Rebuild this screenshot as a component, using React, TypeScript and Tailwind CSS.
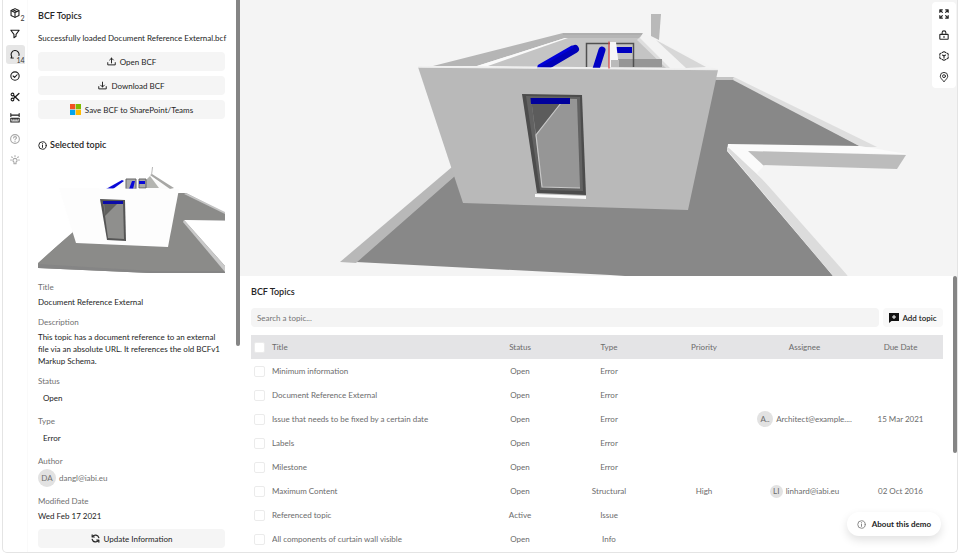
import type { ReactNode } from "react";

type IconProps = { className?: string; children: ReactNode };

function Icon({ className = "size-[10px]", children }: IconProps) {
  return (
    <svg
      viewBox="0 0 24 24"
      className={`shrink-0 ${className}`}
      fill="none"
      stroke="currentColor"
      strokeWidth="2.6"
      strokeLinejoin="round"
      strokeLinecap="round"
      aria-hidden="true"
    >
      {children}
    </svg>
  );
}

const infoShape = (
  <>
    <circle cx="12" cy="12" r="10" />
    <path d="M12 11v6M12 7v.5" />
  </>
);

const tools = [
  {
    label: "Models",
    count: "2",
    shape: (
      <>
        <path d="M12 1.500 21.500 6v12L12 22.500 2.500 18V6z" />
        <path d="M3 6.500 12 11l9-4.500M12 11v11M7 4l9 4.500" />
      </>
    ),
  },
  { label: "Filter", shape: <path d="M2 3h20l-7.500 10v4.500L9.500 21v-8z" /> },
  {
    label: "Topics",
    count: "14",
    active: true,
    shape: <path d="M8 19H2.500l1.500-3.500A9.500 9.500 0 1 1 21.500 13" />,
  },
  {
    label: "Checks",
    shape: (
      <>
        <circle cx="12" cy="12" r="10" />
        <path d="m7.500 12 3.500 3.500 6-6.500" />
      </>
    ),
  },
  {
    label: "Clipping",
    shape: (
      <>
        <circle cx="6" cy="6" r="3.300" />
        <circle cx="6" cy="18" r="3.300" />
        <path d="M8.500 8.500 21.500 20.500M8.500 15.500 21.500 3.500" strokeWidth="3" />
      </>
    ),
  },
  {
    label: "Measure",
    shape: (
      <>
        <path d="M2 1.500v7M22 1.500v7M2 5h20" />
        <path d="M2 12.500h20v9H2zM7 13v4M12 13v4M17 13v4" />
      </>
    ),
  },
  {
    label: "Help",
    muted: true,
    shape: (
      <>
        <circle cx="12" cy="12" r="10.500" />
        <path d="M8.500 9.500c.500-4.500 7.500-4 7 0-.300 2-3.500 2.500-3.500 4.500M12 17.500v.500" />
      </>
    ),
  },
  {
    label: "Tips",
    muted: true,
    shape: (
      <>
        <path d="M9.500 17c-4-2.500-3-9 2.500-9s6.500 6.500 2.500 9v4h-5z" />
        <path d="M12 1.500v2M1.500 12h2M20.500 12h2M4 4.500l1.500 1.500M20 4.500l-1.500 1.500" />
      </>
    ),
  },
];

function ToolRail() {
  return (
    <nav
      aria-label="Tools"
      className="flex w-[25px] shrink-0 flex-col items-center gap-[2px] border-r border-[#fafafa] pt-[3px]"
    >
      {tools.map((tool) => (
        <button
          key={tool.label}
          aria-label={tool.label}
          className={`relative flex h-[19px] w-[19px] items-center justify-center rounded-[3px] ${
            tool.active ? "bg-[#e6e6e6]" : ""
          } ${tool.muted ? "text-[#a8a8a8]" : "text-[#1c1c1c]"}`}
        >
          <Icon>{tool.shape}</Icon>
          {tool.count && (
            <span
              className={`absolute right-0 bottom-0 text-[7px] leading-[7px] text-[#333] ${
                tool.active ? "bg-[#e6e6e6]" : ""
              }`}
            >
              {tool.count}
            </span>
          )}
        </button>
      ))}
    </nav>
  );
}

const panelButton =
  "flex h-[19px] w-full items-center justify-center gap-1 rounded-[4px] bg-[#f5f5f5] text-[#242424]";

function Thumbnail() {
  return (
    <svg viewBox="38 160 187 113" className="block w-full" role="img" aria-label="Topic snapshot">
      <path d="M38 263 72 232 90 200 179 193 186 193 225 213V273L150 273 38 268z" fill="#8b8b89" />
      <path d="M38 263v5l112 5h75v-2h-72L38 264z" fill="#858585" />
      <path d="M184 220h41v46z" fill="#fff" />
      <path d="m184 220 41 46v6l-42-50z" fill="#c9c9c9" />
      <path d="m186 193 39 19v2l-41-20z" fill="#c4c4c4" />
      <path d="M59 188 38 255v7l35-30z" fill="#fff" />
      <path d="M187 221h38v-1z" fill="#bbb" />
      <path d="M105 188 123 180 152 179 174 189z" fill="#fbfbfb" />
      <path d="M146 188V180l4-4 9 12z" fill="#b4b5b1" />
      <path d="m150 175 2-1 22 14-4 1z" fill="#a7a7a5" />
      <path d="m151 176 1-9h1l-1 8z" fill="#b5b5b5" />
      <path d="M126 179h10v10h-10zM139 179h7v9h-7z" fill="#aaa" stroke="#666" strokeWidth="1" />
      <path d="m106 189 16-9 2 1-11 8z" fill="#0a0ad8" />
      <path d="m129 189 3-8h3l-2 8zM139 181h6v3h-6z" fill="#0a0ad8" />
      <path d="M59 188 179 189 168 247 76 243z" fill="#fdfdfd" />
      <path d="m100 199 25 1 1 41-19-1z" fill="#555" />
      <path d="m103 201 20 1 1 37-16-1z" fill="#8f8f8d" />
      <path d="m104 203 13 1-12 12z" fill="#60605e" />
      <path d="M103 201h20v3h-20z" fill="#0c0ca8" />
    </svg>
  );
}

function Avatar({ initials, className }: { initials: string; className: string }) {
  return (
    <span className={`flex shrink-0 items-center justify-center rounded-full bg-[#e2e2e2] ${className}`}>
      {initials}
    </span>
  );
}

const fieldLabel = "text-[#707070]";

function TopicPanel() {
  return (
    <aside className="relative w-[212px] shrink-0 overflow-hidden pr-[15px] pl-[10px] leading-3 text-[#242424]">
      <h2 className="mt-[10px] text-[9px] font-semibold">BCF Topics</h2>
      <p className="mt-[10px] whitespace-nowrap">Successfully loaded Document Reference External.bcf</p>
      <div className="mt-2 flex flex-col gap-[5px]">
        <button className={panelButton}>
          <Icon className="size-[9px]">
            <path d="M12 16V3M7 8l5-5 5 5M2 15v6h20v-6" />
          </Icon>
          Open BCF
        </button>
        <button className={panelButton}>
          <Icon className="size-[9px]">
            <path d="M12 3v13M7 11l5 5 5-5M2 15v6h20v-6" />
          </Icon>
          Download BCF
        </button>
        <button className={panelButton}>
          <svg viewBox="0 0 22 22" className="size-[11px]" aria-hidden="true">
            <path d="M0 0h10.500v10.500H0z" fill="#f25022" />
            <path d="M11.500 0H22v10.500H11.500z" fill="#7fba00" />
            <path d="M0 11.500h10.500V22H0z" fill="#00a4ef" />
            <path d="M11.500 11.500H22V22H11.500z" fill="#ffb900" />
          </svg>
          Save BCF to SharePoint/Teams
        </button>
      </div>
      <h3 className="mt-5 mb-[9px] flex items-center gap-[3px] text-[9px] font-semibold">
        <Icon className="size-[9px]">{infoShape}</Icon>
        Selected topic
      </h3>
      <Thumbnail />
      <dl className="mt-2">
        <dt className={fieldLabel}>Title</dt>
        <dd className="mt-[3px]">Document Reference External</dd>
        <dt className={`mt-2 ${fieldLabel}`}>Description</dt>
        <dd className="mt-[3px]">
          This topic has a document reference to an external file via an absolute URL. It references the old BCFv1
          Markup Schema.
        </dd>
        <dt className={`mt-2 ${fieldLabel}`}>Status</dt>
        <dd className="mt-[5px] pl-[5px]">Open</dd>
        <dt className={`mt-[11px] ${fieldLabel}`}>Type</dt>
        <dd className="mt-[5px] pl-[5px]">Error</dd>
        <dt className={`mt-[11px] ${fieldLabel}`}>Author</dt>
        <dd className="mt-[2px] flex items-center gap-[3px] text-[#707070]">
          <Avatar initials="DA" className="size-[18px]" />
          dangl@iabi.eu
        </dd>
        <dt className={`mt-2 ${fieldLabel}`}>Modified Date</dt>
        <dd className="mt-[3px]">Wed Feb 17 2021</dd>
      </dl>
      <button className={`mt-[7px] ${panelButton}`}>
        <Icon className="size-[9px]">
          <path d="M21 10A9.500 9.500 0 0 0 4 7M3 2v6h6M3 14a9.500 9.500 0 0 0 17 3M21 22v-6h-6" strokeWidth="3" />
        </Icon>
        Update Information
      </button>
      <div className="absolute top-0 right-0 h-[346px] w-1 rounded-b-full bg-[#858585]" />
    </aside>
  );
}

function Model() {
  return (
    <svg
      viewBox="240 0 717 276"
      preserveAspectRatio="xMidYMid slice"
      className="absolute inset-0 size-full"
      role="img"
      aria-label="Building model"
    >
      {/* floor slab */}
      <path d="M356 262 454 176 600 100 717 79H734L862 147 728 146 834 277H640L610 275z" fill="#888" />
      <path d="M340 262 452 167 455 176 356 263z" fill="#b8b8b8" />
      {/* terrace walls */}
      <path d="M716 77H734L733 80H716z" fill="#c4c4c4" />
      <path d="m734 77 143 70h-16L733 80z" fill="#dedede" />
      <path d="M728 144 860 146 907 154 748 152 764 166 850 277h-16L727 151z" fill="#fbfbfb" />
      <path d="m764 165 84 111h-15L727 150v-3z" fill="#dcdcdc" />
      <path d="m728 144 20 7 15 14 15 29-50-47z" fill="#fafafa" />
      <path d="M764 166 897 169 906 276H848L757 173z" fill="#f4f4f4" />
      <path d="m748 151 158 4-9 14-134-4z" fill="#bcbcbc" />
      {/* chimney and roof edge */}
      <path d="M651 14h10l-2 26-8-4z" fill="#b9b9b9" />
      <path d="M433 66 563 33H643L641 38H565L477 66z" fill="#b5b5b5" />
      <path d="M563 34h80" stroke="#a8a8a8" />
      <path d="M477 66 565 38h3L488 66z" fill="#fafafa" />
      <path d="M488 66 568 38h73l32 30z" fill="#c4c4c4" />
      <path d="m637 40 5-5 32 33h-8z" fill="#dedede" />
      <path d="m640 38 3-5 75 37-47-1z" fill="#f3f3f3" />
      <path d="m656 40 50 27-20 1z" fill="#d7d7d7" />
      {/* interior openings and beams */}
      <path d="M617 59h45v8h-43z" fill="#969696" />
      <path d="M586.500 67V43.500H633.500V67" fill="none" stroke="#505050" strokeWidth="1.500" />
      <path d="m541 69 34-20" stroke="#0000b8" strokeWidth="8" strokeLinecap="round" />
      <path d="m539 66 33-19" stroke="#0000d8" strokeWidth="3" strokeLinecap="round" />
      <path d="m596 69 6-19" stroke="#0000c4" strokeWidth="7" strokeLinecap="round" />
      <path d="M616 47h16v6h-16z" fill="#0000c0" />
      <path d="M610 42h6l3 25h-10z" fill="#f6f6f6" />
      <path d="M611 60h8v7h-8z" fill="#bababa" />
      {/* front wall */}
      <path d="m418 67 300 3-30 140-225-7z" fill="#b9b9b9" />
      <path d="m418 67 300 2.500" stroke="#eee" strokeWidth="1.500" />
      <path d="M609 41.500v27" stroke="#d84040" strokeWidth="1.200" />
      {/* door */}
      <path d="m522 94 60 1 4 100-49-2z" fill="#4c4c4c" />
      <path d="m526 96 54 1 3 94-43-1z" fill="#626262" />
      <path d="m531 98 46 1 3 89-38-1z" fill="#969696" />
      <path d="m531 99 30 4-25 32z" fill="#5c5c5c" />
      <path d="m561 103-25 32 6 52 38 1" fill="none" stroke="#c8c8c8" strokeWidth="1.200" />
      <path d="M530.500 98H570v6h-39z" fill="#00009c" />
      <path d="m535 194 51 2v3l-51-2z" fill="#fafafa" />
    </svg>
  );
}

const viewTools = [
  {
    label: "Fullscreen",
    shape: (
      <path
        d="M2 8V2h6M3 3l5 5M16 2h6v6M21 3l-5 5M2 16v6h6M3 21l5-5M22 16v6h-6M21 21l-5-5"
        strokeWidth="2.800"
      />
    ),
  },
  {
    label: "Unlock",
    shape: (
      <>
        <rect x="2" y="10.500" width="20" height="11.500" rx="1" />
        <path d="M7.500 10V6.500a4.500 4.500 0 0 1 9 0V8M12 15v3" />
      </>
    ),
  },
  {
    label: "Focus model",
    shape: (
      <>
        <path d="M8 3.500 12 1.500l4 2M19 5l3 2v3M22 14v3l-3 2M16 20.500l-4 2-4-2M5 19l-3-2v-3M2 10V7l3-2" />
        <path d="M12 17v-5M8.500 9.500 12 12l3.500-2.500" />
      </>
    ),
  },
  {
    label: "Location",
    shape: (
      <>
        <path d="M12 23c-5-5-9-9-9-13a9 9 0 0 1 18 0c0 4-4 8-9 13z" strokeWidth="2.200" />
        <circle cx="12" cy="10" r="3.500" strokeWidth="2.200" />
      </>
    ),
  },
];

function Viewer() {
  return (
    <section aria-label="3D viewer" className="relative overflow-hidden bg-[#f4f4f4]">
      <Model />
      <div className="absolute top-[2px] right-px flex w-6 flex-col items-center gap-[2px] rounded-[4px] bg-white pt-[2px] pb-[2px] text-[#242424]">
        {viewTools.map((tool) => (
          <button key={tool.label} aria-label={tool.label} className="flex h-[19px] w-full items-center justify-center">
            <Icon className="size-[10px]">{tool.shape}</Icon>
          </button>
        ))}
      </div>
    </section>
  );
}

type Topic = {
  title: string;
  status: string;
  type: string;
  priority?: string;
  initials?: string;
  assignee?: string;
  due?: string;
};

const topics: Topic[] = [
  { title: "Minimum information", status: "Open", type: "Error" },
  { title: "Document Reference External", status: "Open", type: "Error" },
  {
    title: "Issue that needs to be fixed by a certain date",
    status: "Open",
    type: "Error",
    initials: "A..",
    assignee: "Architect@example....",
    due: "15 Mar 2021",
  },
  { title: "Labels", status: "Open", type: "Error" },
  { title: "Milestone", status: "Open", type: "Error" },
  {
    title: "Maximum Content",
    status: "Open",
    type: "Structural",
    priority: "High",
    initials: "LI",
    assignee: "linhard@iabi.eu",
    due: "02 Oct 2016",
  },
  { title: "Referenced topic", status: "Active", type: "Issue" },
  { title: "All components of curtain wall visible", status: "Open", type: "Info" },
];

const checkbox = "block size-[11px] appearance-none rounded-[2px] border border-[#ebebeb] bg-white";

function TopicTable() {
  return (
    <section className="relative overflow-hidden pr-[14px] pl-[11px]">
      <h2 className="mt-[10px] text-[9px] leading-3 font-semibold text-[#242424]">BCF Topics</h2>
      <div className="mt-[10px] flex gap-1">
        <input
          type="search"
          aria-label="Search a topic"
          placeholder="Search a topic..."
          className="h-[19px] min-w-0 flex-1 rounded-[4px] bg-[#f4f4f4] px-[6px] placeholder:text-[#757575]"
        />
        <button className="flex h-[19px] w-[60px] items-center justify-center gap-[3px] rounded-[4px] bg-[#f8f8f8] font-semibold whitespace-nowrap text-[#242424]">
          <svg viewBox="0 0 20 20" className="size-[10px]" aria-hidden="true">
            <path d="M0 0h20v16H5l-5 4z" fill="#111" />
            <path d="M10 4v8M6 8h8" stroke="#fff" strokeWidth="2" />
          </svg>
          Add topic
        </button>
      </div>
      <table className="mt-2 w-full table-fixed border-collapse text-center text-[#6b6b6b]">
        <colgroup>
          <col className="w-[21px]" />
          <col />
          <col className="w-[82px]" />
          <col className="w-[96px]" />
          <col className="w-[94px]" />
          <col className="w-[107px]" />
          <col className="w-[85px]" />
        </colgroup>
        <thead className="bg-[#e4e4e6]">
          <tr className="h-6">
            <th className="pl-[3px]">
              <input type="checkbox" aria-label="Select all topics" className={checkbox} />
            </th>
            <th className="text-left font-normal">Title</th>
            <th className="font-normal">Status</th>
            <th className="font-normal">Type</th>
            <th className="font-normal">Priority</th>
            <th className="font-normal">Assignee</th>
            <th className="font-normal">Due Date</th>
          </tr>
        </thead>
        <tbody>
          {topics.map((topic) => (
            <tr key={topic.title} className="h-6">
              <td className="pl-[3px]">
                <input type="checkbox" aria-label={`Select ${topic.title}`} className={checkbox} />
              </td>
              <td className="truncate text-left">{topic.title}</td>
              <td>{topic.status}</td>
              <td>{topic.type}</td>
              <td>{topic.priority}</td>
              <td>
                {topic.assignee && topic.initials && (
                  <span className="flex items-center justify-center gap-[3px] whitespace-nowrap">
                    <Avatar initials={topic.initials} className={topic.initials === "LI" ? "size-[13px]" : "size-4"} />
                    {topic.assignee}
                  </span>
                )}
              </td>
              <td>{topic.due}</td>
            </tr>
          ))}
        </tbody>
      </table>
      <div className="absolute top-0 right-0 h-[177px] w-1 rounded-full bg-[#858585]" />
      <button className="absolute right-4 bottom-4 flex h-6 items-center gap-[6px] rounded-full bg-white px-[10px] font-bold text-[#242424] shadow-[0_4px_10px_rgba(0,0,0,0.12)]">
        <Icon className="size-[9px] text-[#888]">{infoShape}</Icon>
        About this demo
      </button>
    </section>
  );
}

export default function App() {
  return (
    <div className="h-screen bg-white px-[2px] pb-px font-['Lato','Segoe_UI',sans-serif] text-[8px] leading-3">
      <div className="flex h-full overflow-hidden rounded-b-[5px] border-x border-b border-[#e4e4e4]">
        <ToolRail />
        <TopicPanel />
        <main className="grid min-w-0 flex-1 grid-rows-2">
          <Viewer />
          <TopicTable />
        </main>
      </div>
    </div>
  );
}
